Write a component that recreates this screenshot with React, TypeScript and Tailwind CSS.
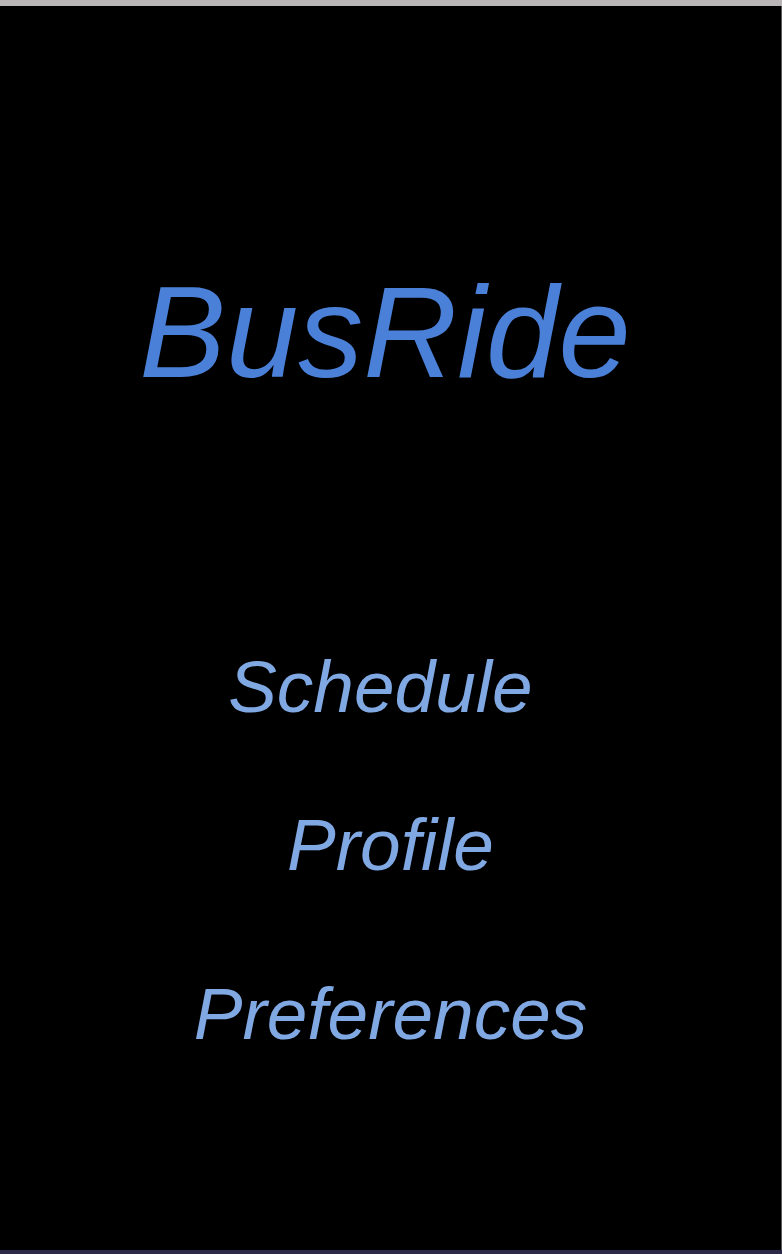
const menuItems = [
  { label: "Schedule\u00a0", gap: "mt-[253px]" },
  { label: "Profile", gap: "mt-[85px]" },
  { label: "Preferences", gap: "mt-[96px]" },
];

export default function App() {
  return (
    <div className="flex h-[1254px] w-full flex-col bg-black font-['Liberation_Sans',Arial,sans-serif] italic">
      <div className="h-[6px] w-full bg-[#bab6b7]" />
      <main className="flex flex-1 flex-col items-center border-r border-[#5a5a5a] bg-black pt-[261px]">
        <h1 className="pr-[11px] text-[130px] leading-none font-normal text-[#4a80d8]">
          BusRide
        </h1>
        <nav className="flex flex-col items-center">
          {menuItems.map((item) => (
            <a
              key={item.label}
              href="#"
              className={`${item.gap} text-[73px] leading-none text-[#80a8e2]`}
            >
              {item.label}
            </a>
          ))}
        </nav>
      </main>
      <div className="h-[4px] w-full bg-[#2b2947]" />
    </div>
  );
}
